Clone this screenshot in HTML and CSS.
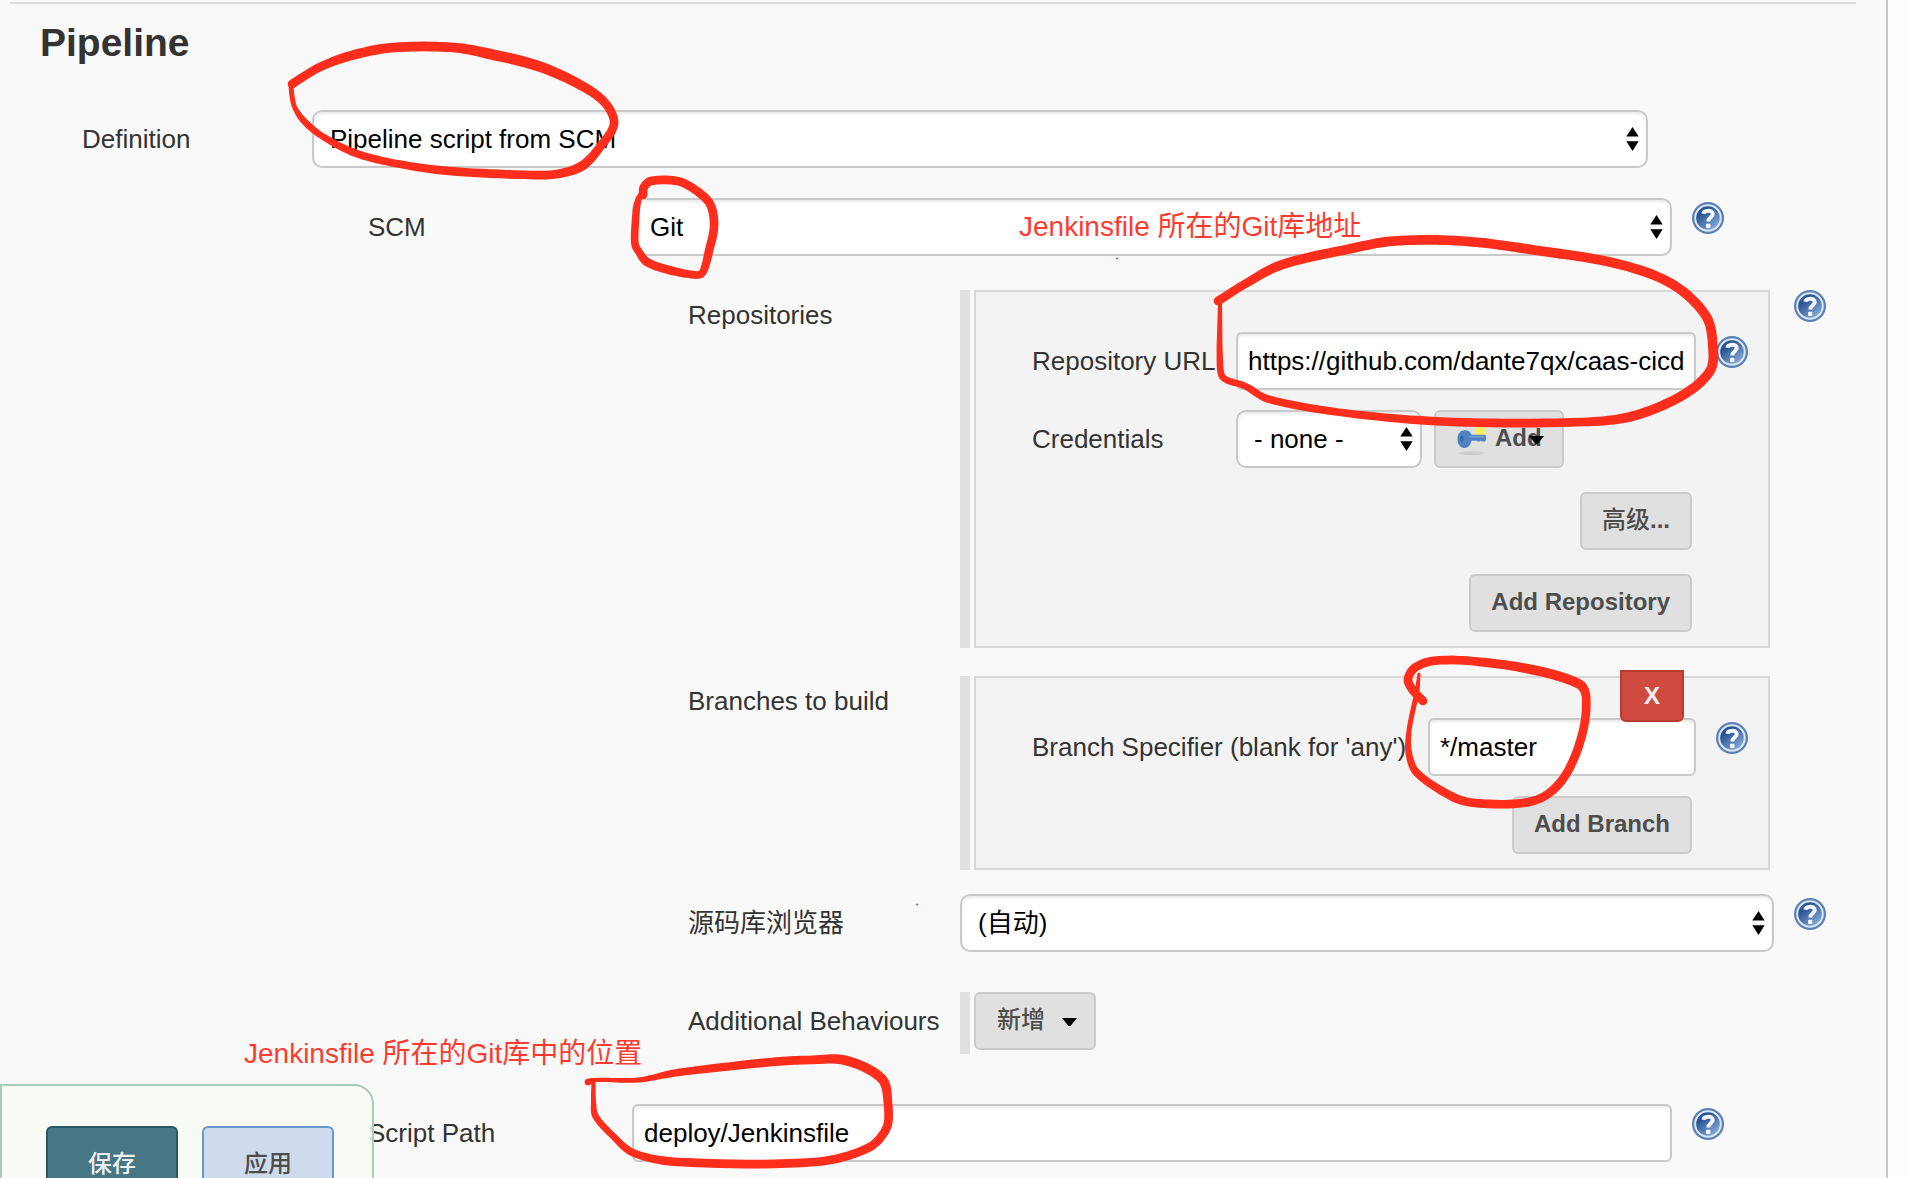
FILE: index.html
```html
<!DOCTYPE html>
<html lang="zh-CN">
<head>
<meta charset="utf-8">
<title>Pipeline</title>
<link rel="stylesheet" href="styles.css">
</head>
<body>
<svg class="defs" width="0" height="0" aria-hidden="true">
  <defs>
    <linearGradient id="blue" x1="0.1" y1="0.1" x2="0.8" y2="1">
      <stop offset="0.25" stop-color="#2a5594"/><stop offset="1" stop-color="#8fb4de"/>
    </linearGradient>
    <symbol id="help" viewBox="0 0 32 32">
      <circle cx="16" cy="16" r="16" fill="#5b80b5"/>
      <circle cx="16" cy="16" r="12.8" fill="url(#blue)" stroke="#dbe5f2" stroke-width="2"/>
      <path d="M11.4 11.8C11.800 8 20.600 7.200 20.800 12c.1 3-4.500 3.500-4.500 7.400" fill="none" stroke="#f2f6fb" stroke-width="4"/>
      <rect x="14" y="21.800" width="4.400" height="4.200" rx="1" fill="#f2f6fb"/>
    </symbol>
    <symbol id="updown" viewBox="0 0 13 24">
      <path d="M6.500 0 12.700 9.600H.3zM6.500 24 12.700 14.200H.3z"/>
    </symbol>
    <symbol id="caret" viewBox="0 0 15 8"><path d="M0 0h15L8.500 8h-2z"/></symbol>
  </defs>
</svg>
<main class="config">
  <hr class="rule">
  <h1 class="title">Pipeline</h1>

  <div class="row row-definition">
    <span class="label">Definition</span>
    <div class="select"><span>Pipeline script from SCM</span><svg class="updown"><use href="#updown"/></svg></div>
  </div>

  <div class="row row-scm">
    <span class="label">SCM</span>
    <div class="select"><span>Git</span><svg class="updown"><use href="#updown"/></svg></div>
    <svg class="help"><use href="#help"/></svg>
  </div>

  <div class="row row-git repositories">
    <span class="label">Repositories</span>
    <div class="handle"></div>
    <section class="chunk">
      <div class="field">
        <span class="label">Repository URL</span>
        <div class="input">https://github.com/dante7qx/caas-cicd</div>
        <svg class="help"><use href="#help"/></svg>
      </div>
      <div class="field">
        <span class="label">Credentials</span>
        <div class="select"><span>- none -</span><svg class="updown"><use href="#updown"/></svg></div>
        <div class="button button-key">
          <svg class="key" viewBox="0 0 32 32">
            <ellipse cx="16" cy="28" rx="13" ry="2" fill="#cdcdcd"/>
            <circle cx="25" cy="5.500" r="5.500" fill="#f8ee62"/>
            <path d="M9 4.500c4 0 6 2 7 4.500h13.500c2 0 2 6 .5 7h-3l-1.500-.8-2 1.100-2-1.100H16c-1.500 5-3.500 7.500-7.500 7.500C4 22.700 1.500 18 1.500 13.500S4 4.500 9 4.500z" fill="#4f84c2"/>
            <path d="M14 11h15" stroke="#6f9dd2" stroke-width="2"/>
            <ellipse cx="6" cy="13" rx="1.800" ry="3" fill="#3a68a8"/>
          </svg>
          <span>Add</span><svg class="caret"><use href="#caret"/></svg>
        </div>
      </div>
      <div class="actions"><div class="button"><span class="cjk">高级</span>...</div></div>
      <div class="actions"><div class="button">Add Repository</div></div>
    </section>
    <svg class="help"><use href="#help"/></svg>
  </div>

  <div class="row row-git branches">
    <span class="label">Branches to build</span>
    <div class="handle"></div>
    <section class="chunk">
      <div class="button delete">X</div>
      <div class="field">
        <span class="label">Branch Specifier (blank for 'any')</span>
        <div class="input">*/master</div>
        <svg class="help"><use href="#help"/></svg>
      </div>
      <div class="actions"><div class="button">Add Branch</div></div>
    </section>
  </div>

  <div class="row row-git browser">
    <span class="label">源码库浏览器</span>
    <div class="select"><span>(自动)</span><svg class="updown"><use href="#updown"/></svg></div>
    <svg class="help"><use href="#help"/></svg>
  </div>

  <div class="row row-git behaviours">
    <span class="label">Additional Behaviours</span>
    <div class="handle"></div>
    <div class="button"><span class="cjk">新增</span><svg class="caret"><use href="#caret"/></svg></div>
  </div>

  <div class="row row-scm script-path">
    <span class="label">Script Path</span>
    <div class="input">deploy/Jenkinsfile</div>
    <svg class="help"><use href="#help"/></svg>
  </div>
</main>

<footer class="save-bar">
  <div class="button save"><span class="cjk">保存</span></div>
  <div class="button apply"><span class="cjk">应用</span></div>
</footer>

<svg class="ink" id="ink" width="1908" height="1178"></svg>
<p class="note note-address">Jenkinsfile 所在的Git库地址</p>
<p class="note note-location">Jenkinsfile 所在的Git库中的位置</p>
<script src="ink.js"></script>
</body>
</html>
```
FILE: styles.css
```css
* { box-sizing: border-box; }
body {
  margin: 0;
  height: 1178px;
  overflow: hidden;
  position: relative;
  background: #fdfdfd;
  color: #333;
  font: 26px/58px "Liberation Sans", "Noto Sans CJK SC", sans-serif;
  white-space: nowrap;
}
.defs { position: absolute; }
.config {
  width: 1888px;
  height: 1178px;
  padding-top: 2px;
  border-right: 2px solid #c9c9c9;
  background: #f9f9f9;
}
.rule { width: 1846px; height: 2px; margin: 0 0 0 10px; border: 0; background: #dcdcdc; }
.title { margin: 10px 0 38px 40px; font-size: 39px; line-height: 58px; font-weight: 700; }

.row { display: flex; align-items: flex-start; }
.label { flex: none; }
.row-definition { padding-left: 82px; margin-bottom: 30px; }
.row-definition > .label { width: 230px; }
.row-definition > .select { width: 1336px; }
.row-scm { padding-left: 368px; }
.row-scm > .label { width: 264px; }
.row-scm > .select, .row-scm > .input { width: 1040px; }
.row-git { padding-left: 688px; }
.row-git > .label { width: 272px; }

.select, .input {
  display: flex;
  flex: none;
  height: 58px;
  border: 2px solid #c9c9c9;
  background: #fff;
  box-shadow: inset 0 2px 3px rgba(0, 0, 0, .09);
  color: #000;
  line-height: 54px;
}
.select { justify-content: space-between; align-items: center; padding: 0 7px 0 16px; border-radius: 10px; }
.input { padding-left: 10px; border-radius: 6px; }
.updown { width: 13px; height: 24px; }
.help { flex: none; width: 32px; height: 32px; margin: 4px 0 0 20px; }

.handle { width: 10px; margin-right: 4px; background: #e0e0e0; align-self: stretch; }
.chunk { width: 796px; border: 2px solid #d8d8d8; background: #f3f3f3; padding: 40px 0 0 56px; }
.field { display: flex; }
.field > .label { width: 204px; }
.field > .input { width: 460px; }
.field > .select { width: 186px; }
.actions { display: flex; justify-content: flex-end; padding-right: 76px; }

.button {
  display: flex;
  height: 58px;
  padding: 0 20px;
  border: 2px solid #cbcbcb;
  border-radius: 6px;
  background: #e0e0e0;
  color: #4d4d4d;
  font-size: 24px;
  font-weight: 700;
  line-height: 52px;
}
.cjk { font-weight: 500; }
.caret { width: 15px; height: 8px; fill: #000; }

.repositories { height: 358px; margin-top: 34px; }
.repositories > .label, .branches > .label { line-height: 50px; }
.repositories .handle, .repositories .chunk { height: 358px; }
.repositories > .help { margin: 0 0 0 24px; }
.repositories .field + .field { margin-top: 20px; }
.repositories .actions { margin-top: 24px; }
.button-key { width: 130px; margin-left: 12px; }
.key { flex: none; width: 31px; height: 31px; margin: 14px 8px 0 0; }
.button-key .caret { flex: none; margin: 24px 0 0 -13px; }

.branches { height: 194px; margin-top: 28px; }
.branches .chunk { position: relative; height: 194px; }
.branches .field > .label { width: 396px; }
.branches .field > .input { width: 268px; }
.branches .actions { margin-top: 20px; }
.delete {
  position: absolute;
  top: -8px;
  right: 84px;
  width: 64px;
  height: 52px;
  justify-content: center;
  border-color: #b93b30;
  border-radius: 0 0 6px 6px;
  background: #d04b3f;
  color: #f2eeee;
  line-height: 48px;
}

.browser { margin-top: 24px; }
.browser > .select { width: 814px; }
.behaviours { height: 62px; margin-top: 40px; }
.behaviours .caret { margin: 24px 0 0 17px; }
.behaviours > .button { width: 122px; padding: 0 0 0 21px; }
.script-path { margin-top: 50px; }

.save-bar {
  position: absolute;
  left: 0;
  top: 1084px;
  width: 374px;
  height: 150px;
  display: flex;
  gap: 24px;
  padding: 40px 0 0 44px;
  border: 2px solid #a9cbb7;
  border-radius: 0 20px 0 0;
  background: rgba(248, 251, 242, .85);
}
.save-bar .button { flex: none; width: 132px; height: 80px; padding: 0; justify-content: center; line-height: 72px; }
.save-bar .save { border-color: #2e5766; background: #477684; color: #f0f0f0; }
.save-bar .apply { border-color: #6699cc; background: #cddbec; }

.ink { position: absolute; left: 0; top: 1px; }
.note { position: absolute; margin: 0; color: #ff3b30; font-size: 28px; line-height: 40px; }
.note-address { left: 1019px; top: 207px; }
.note-location { left: 244px; top: 1034px; }
```
FILE: ink.js
```js
// Freehand pen strokes: each point is [x, y, pen width].
const strokes = [
  [[292,83,8],[320,66,8],[355,53.5,9],[394,46.5,9],[453,46.5,9],[490,53,10],[541,66,10],[584,86,9],[606,103,8],[614,123,8],[600,146,8],[582,165,9],[557,173,8],[531,174,8],[449,170,8],[396,162.5,7],[355,152,7],[322,135,6],[304,120,6],[295,107,5],[292,95,5],[291,84,5]],
  [[643,194,8],[644,186,8],[651,180,8],[677,180,8],[694,188,8],[710,203,8],[714,225,8],[709,250,8],[703,271,7],[697,274,7],[669,269,8],[647,261,8],[639,251,7],[635,243,7],[635.5,220,7],[638,200,6],[643,190,5]],
  [[1218,300,8],[1245,283,8],[1281,264,9],[1349,248,9],[1394,240,9],[1462,240,9],[1534,249,9],[1618,263,9],[1672,283,9],[1706,315,9],[1713,347,9],[1710,370,9],[1683,394,9],[1633,415,9],[1583,421,8],[1453,421,8],[1345,412,7],[1268,398,7],[1245,385,6],[1223.5,377,6],[1220,363,6],[1220,303,4]],
  [[1423,700,8],[1412,688,8],[1408,678,8],[1414.5,667,8],[1432.5,660,8],[1471,660,8],[1534,669,9],[1579,683,9],[1586,695,8],[1583,730,8],[1568,770,8],[1548,793,8],[1523,802,8],[1475,802,8],[1453,796,8],[1417,772,7],[1409,753,6],[1409,730,5],[1417,690,5],[1419,673,3]],
  [[588,1081,6],[594,1079,4],[638,1079,5],[678,1071.5,7],[772,1061,8],[809,1059,8],[846,1059.5,9],[882,1078,9],[888,1103,8],[886.5,1127,8],[868,1147,8],[815,1161,8],[678,1161,8],[633.5,1152,7],[613,1135,6],[595.5,1115,6],[593.5,1100,5],[593.5,1080,4]],
  [[1117,257.5,1.6],[1117.3,257.5,1.6]],
  [[917,903.5,1.6],[917.3,903.5,1.6]]
];
const svg = document.getElementById('ink');
// Tangents are scaled by segment length so uneven spacing does not overshoot.
const hermite = (p, a, b, n, k, t) => {
  const len = (u, v) => Math.hypot(u[0] - v[0], u[1] - v[1]);
  const l0 = len(p, a), l1 = len(a, b), l2 = len(b, n);
  const m0 = (b[k] - p[k]) / (l0 + l1) * l1, m1 = (n[k] - a[k]) / (l1 + l2) * l1;
  const t2 = t * t, t3 = t2 * t;
  return (2 * t3 - 3 * t2 + 1) * a[k] + (t3 - 2 * t2 + t) * m0 + (3 * t2 - 2 * t3) * b[k] + (t3 - t2) * m1;
};
const el = (name, attrs) => {
  const node = document.createElementNS('http://www.w3.org/2000/svg', name);
  for (const k in attrs) node.setAttribute(k, attrs[k]);
  svg.appendChild(node);
};
for (const s of strokes) {
  const left = [], right = [];
  for (const q of s) if (q[2] > 5) q[2] += 0.7;
  for (let i = 0; i < s.length - 1; i++) {
    const p = s[Math.max(0, i - 1)], a = s[i], b = s[i + 1], n = s[Math.min(s.length - 1, i + 2)];
    for (let j = 0; j <= 10; j++) {
      const t = j / 10, e = 0.01;
      const x = hermite(p, a, b, n, 0, t), y = hermite(p, a, b, n, 1, t);
      const dx = hermite(p, a, b, n, 0, t + e) - hermite(p, a, b, n, 0, t - e);
      const dy = hermite(p, a, b, n, 1, t + e) - hermite(p, a, b, n, 1, t - e);
      const l = Math.hypot(dx, dy) || 1, w = (a[2] + (b[2] - a[2]) * t) / 2;
      left.push([x - dy / l * w, y + dx / l * w]);
      right.unshift([x + dy / l * w, y - dx / l * w]);
    }
  }
  el('path', { d: 'M' + left.concat(right).map(q => q.map(v => v.toFixed(1)).join(' ')).join('L') + 'Z', fill: '#ff2d1c' });
  for (const q of [s[0], s[s.length - 1]]) el('circle', { cx: q[0], cy: q[1], r: q[2] / 2, fill: '#ff2d1c' });
}
```
